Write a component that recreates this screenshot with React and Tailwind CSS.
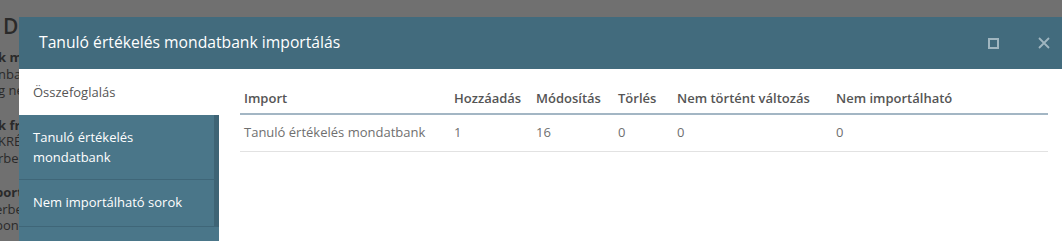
const font = { fontFamily: '"Open Sans", "Noto Sans", sans-serif' };

const columns = [
  { label: "Import", value: "Tanuló értékelés mondatbank" },
  { label: "Hozzáadás", value: "1" },
  { label: "Módosítás", value: "16" },
  { label: "Törlés", value: "0" },
  { label: "Nem történt változás", value: "0" },
  { label: "Nem importálható", value: "0" },
];

function BackgroundPage() {
  return (
    <div className="absolute inset-0 bg-[#707070] text-[#2a2a2a] text-[13px] leading-[16.5px] overflow-hidden">
      <div className="pt-[13px] pl-[3px] text-[21px] leading-[26px] font-semibold whitespace-nowrap">
        D l étékelések importálása
      </div>
      <div className="mt-[10px] -ml-[2px] whitespace-nowrap">
        <div className="font-bold">k mondatbank</div>
        <div>nbank</div>
        <div>g nem</div>
      </div>
      <div className="mt-[18px] -ml-[2px] whitespace-nowrap">
        <div className="font-bold">k frissítése</div>
        <div>KRÉTA</div>
        <div>rben</div>
      </div>
      <div className="mt-[18px] -ml-[5px] whitespace-nowrap">
        <div className="font-bold">port</div>
        <div>erben</div>
        <div>pon</div>
      </div>
    </div>
  );
}

function Sidebar() {
  return (
    <div className="w-[200px] shrink-0 flex flex-col text-[13px] leading-[20px]">
      <div className="bg-white text-[#555] pl-[14px] py-[13px]">Összefoglalás</div>
      <div className="bg-[#4a7689] text-white pl-[14px] pr-[20px] py-[12px] border-r-[5px] border-r-[#3e6475] border-b border-b-[#3f6678] h-[65px]">
        Tanuló értékelés mondatbank
      </div>
      <div className="bg-[#4a7689] text-white pl-[14px] py-[12px] border-r-[5px] border-r-[#3e6475] border-b border-b-[#3f6678] h-[47px]">
        Nem importálható sorok
      </div>
      <div className="bg-[#4a7689] flex-1 min-h-[20px]" />
    </div>
  );
}

function ImportTable() {
  return (
    <div className="flex-1 pt-[16px] pl-[21px] pr-[14px] bg-white">
      <div className="w-[808px] text-[13px]">
        <div className="grid grid-cols-[210px_82px_82px_59px_159px_1fr] border-b-2 border-[#a3b6c4] h-[30px] items-center">
          {columns.map((c) => (
            <div key={c.label} className="pl-[4px] font-semibold text-[#555] whitespace-nowrap">
              {c.label}
            </div>
          ))}
        </div>
        <div className="grid grid-cols-[210px_82px_82px_59px_159px_1fr] border-b border-[#e2e2e2] h-[37px] items-center">
          {columns.map((c) => (
            <div key={c.label} className="pl-[4px] text-[#6f6f6f] whitespace-nowrap">
              {c.value}
            </div>
          ))}
        </div>
      </div>
    </div>
  );
}

export default function App() {
  return (
    <div className="relative w-[1062px] h-[241px] overflow-hidden" style={font}>
      <BackgroundPage />

      {/* Modal */}
      <div className="absolute left-[19px] top-[17px] w-[1060px] h-[240px] flex flex-col bg-white">
        <div className="h-[52px] bg-[#426b7d] flex items-center pl-[20px] pr-[12px]">
          <h2 className="flex-1 text-[15.7px] text-white">Tanuló értékelés mondatbank importálás</h2>
          <button className="w-[20px] h-[20px] flex items-center justify-center mr-[31px]">
            <span className="block w-[11px] h-[11px] border-2 border-[#a0b6c0]" />
          </button>
          <button className="w-[20px] h-[20px] flex items-center justify-center mr-[13px]">
            <svg width="12" height="12" viewBox="0 0 12 12" fill="none" stroke="#a0b6c0" strokeWidth="1.8">
              <path d="M1 1 L11 11 M11 1 L1 11" />
            </svg>
          </button>
        </div>
        <div className="flex flex-1">
          <Sidebar />
          <ImportTable />
        </div>
      </div>
    </div>
  );
}
